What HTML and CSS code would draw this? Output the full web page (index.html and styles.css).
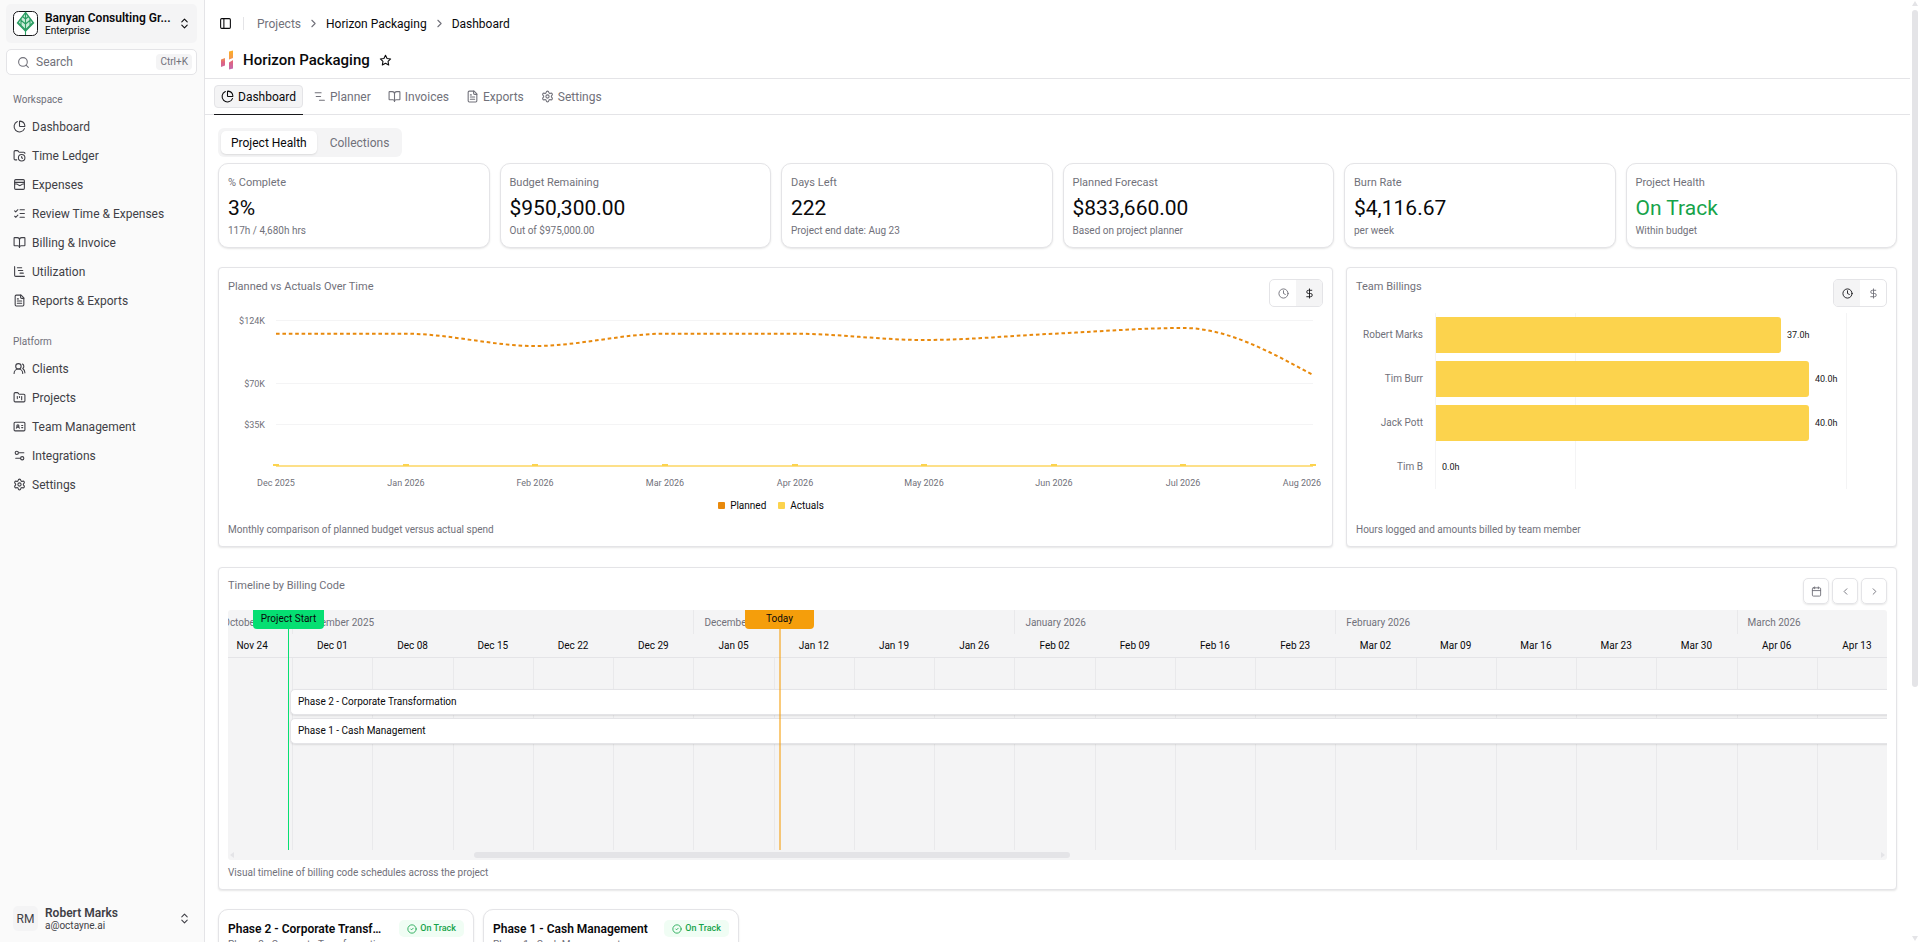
FILE: index.html
```
<!DOCTYPE html>
<html lang="en">
<head>
    <meta charset="UTF-8">
    <meta name="viewport" content="width=device-width, initial-scale=1.0">
    <title>Horizon Packaging - Dashboard</title>
    <link rel="stylesheet" href="styles.css">
</head>
<body>
    <!-- shared icons -->
    <svg class="sprite" aria-hidden="true">
        <symbol id="i-pie" viewBox="0 0 24 24"><path d="M21 12c.552 0 1.005-.449.95-.998a10 10 0 0 0-8.953-8.951c-.55-.055-.998.398-.998.95v8a1 1 0 0 0 1 1z"/><path d="M21.21 15.89A10 10 0 1 1 8 2.83"/></symbol>
        <symbol id="i-folder-clock" viewBox="0 0 24 24"><path d="M16 14v2.2l1.6 1"/><path d="M7 20H4a2 2 0 0 1-2-2V5a2 2 0 0 1 2-2h3.9a2 2 0 0 1 1.69.9l.81 1.2a2 2 0 0 0 1.67.9H20a2 2 0 0 1 2 2"/><circle cx="16" cy="16" r="6"/></symbol>
        <symbol id="i-wallet" viewBox="0 0 24 24"><rect x="3" y="3" width="18" height="18" rx="2"/><path d="M3 8h18"/><path d="M3 11h3.500c.8 0 1.600.3 2.100.9l1.100.9c1.600 1.600 4.100 1.600 5.700 0l1.100-.9c.5-.5 1.300-.9 2.100-.9H21"/></symbol>
        <symbol id="i-checks" viewBox="0 0 24 24"><path d="M13 5h8"/><path d="M13 12h8"/><path d="M13 19h8"/><path d="m3 17 2 2 4-4"/><path d="m3 7 2 2 4-4"/></symbol>
        <symbol id="i-book" viewBox="0 0 24 24"><path d="M12 7v14"/><path d="M3 18a1 1 0 0 1-1-1V4a1 1 0 0 1 1-1h5a4 4 0 0 1 4 4 4 4 0 0 1 4-4h5a1 1 0 0 1 1 1v13a1 1 0 0 1-1 1h-6a3 3 0 0 0-3 3 3 3 0 0 0-3-3z"/></symbol>
        <symbol id="i-gantt" viewBox="0 0 24 24"><path d="M3 3v16a2 2 0 0 0 2 2h16"/><path d="M8 5h8"/><path d="M10 10h8"/><path d="M13 15h6"/></symbol>
        <symbol id="i-file" viewBox="0 0 24 24"><path d="M15 2H6a2 2 0 0 0-2 2v16a2 2 0 0 0 2 2h12a2 2 0 0 0 2-2V7Z"/><path d="M14 2v4a2 2 0 0 0 2 2h4"/><path d="M10 9H8"/><path d="M16 13H8"/><path d="M16 17H8"/></symbol>
        <symbol id="i-users" viewBox="0 0 24 24"><path d="M18 21a8 8 0 0 0-16 0"/><circle cx="10" cy="8" r="5"/><path d="M22 20c0-3.370-2-6.500-4-8a5 5 0 0 0-.45-8.300"/></symbol>
        <symbol id="i-folder-kanban" viewBox="0 0 24 24"><path d="M4 20h16a2 2 0 0 0 2-2V8a2 2 0 0 0-2-2h-7.930a2 2 0 0 1-1.660-.9l-.82-1.200A2 2 0 0 0 7.930 3H4a2 2 0 0 0-2 2v13c0 1.100.9 2 2 2Z"/><path d="M8 10v4"/><path d="M12 10v2"/><path d="M16 10v6"/></symbol>
        <symbol id="i-id" viewBox="0 0 24 24"><path d="M16 10h2"/><path d="M16 14h2"/><path d="M6.170 15a3 3 0 0 1 5.660 0"/><circle cx="9" cy="11" r="2"/><rect x="2" y="4" width="20" height="16" rx="2"/></symbol>
        <symbol id="i-sliders" viewBox="0 0 24 24"><path d="M20 7h-9"/><path d="M14 17H5"/><circle cx="17" cy="17" r="3"/><circle cx="7" cy="7" r="3"/></symbol>
        <symbol id="i-gear" viewBox="0 0 24 24"><path d="M9.671 4.136a2.340 2.340 0 0 1 4.659 0 2.340 2.340 0 0 0 3.319 1.915 2.340 2.340 0 0 1 2.330 4.033 2.340 2.340 0 0 0 0 3.831 2.340 2.340 0 0 1-2.330 4.033 2.340 2.340 0 0 0-3.319 1.915 2.340 2.340 0 0 1-4.659 0 2.340 2.340 0 0 0-3.320-1.915 2.340 2.340 0 0 1-2.330-4.033 2.340 2.340 0 0 0 0-3.831A2.340 2.340 0 0 1 6.350 6.051a2.340 2.340 0 0 0 3.319-1.915"/><circle cx="12" cy="12" r="3"/></symbol>
        <symbol id="i-updown" viewBox="0 0 24 24"><path d="m7 15 5 5 5-5"/><path d="m7 9 5-5 5 5"/></symbol>
        <symbol id="i-search" viewBox="0 0 24 24"><circle cx="11" cy="11" r="8"/><path d="m21 21-4.300-4.300"/></symbol>
        <symbol id="i-panel" viewBox="0 0 24 24"><rect x="3" y="3" width="18" height="18" rx="2"/><path d="M9 3v18"/></symbol>
        <symbol id="i-right" viewBox="0 0 24 24"><path d="m9 18 6-6-6-6"/></symbol>
        <symbol id="i-left" viewBox="0 0 24 24"><path d="m15 18-6-6 6-6"/></symbol>
        <symbol id="i-star" viewBox="0 0 24 24"><path d="M12 2.300l2.900 6 6.600.9-4.800 4.600 1.200 6.600-5.900-3.200-5.900 3.200 1.200-6.600L2.500 9.200l6.600-.9z"/></symbol>
        <symbol id="i-planner" viewBox="0 0 24 24"><path d="M4 5h11"/><path d="M6 12h8"/><path d="M12 19h9"/></symbol>
        <symbol id="i-clock" viewBox="0 0 24 24"><circle cx="12" cy="12" r="10"/><path d="M12 6v6l4 2"/></symbol>
        <symbol id="i-dollar" viewBox="0 0 24 24"><path d="M12 2v20"/><path d="M17 5H9.500a3.500 3.500 0 0 0 0 7h5a3.500 3.500 0 0 1 0 7H6"/></symbol>
        <symbol id="i-calendar" viewBox="0 0 24 24"><path d="M8 2v4"/><path d="M16 2v4"/><rect x="3" y="4" width="18" height="18" rx="2"/><path d="M3 10h18"/></symbol>
        <symbol id="i-check" viewBox="0 0 24 24"><circle cx="12" cy="12" r="10"/><path d="m9 12 2 2 4-4"/></symbol>
    </svg>

    <div class="app">
        <aside class="sidebar">
            <button class="org" type="button">
                <svg class="org-logo" viewBox="0 0 25 25">
                    <rect x=".5" y=".5" width="24" height="24" rx="5" fill="#fff" stroke="#18181b"/>
                    <path d="M12.500 1.500 20.500 12 12.500 20 4.500 12Z" fill="#c9ecd8" stroke="#2a9d62" stroke-width="1.300"/>
                    <path d="M12.500 2v22M12.500 19 5 11.500M12.500 19 20 11.500M12.500 13 7 8.500M12.500 13 18 8.500M12.500 8 9.500 5.500M12.500 8l3-2.500M8 8v6M17 8v6" fill="none" stroke="#2a9d62" stroke-width="1.100"/>
                </svg>
                <span class="who">
                    <span class="who-name">Banyan Consulting Gr...</span>
                    <span class="who-sub">Enterprise</span>
                </span>
                <svg class="icon"><use href="#i-updown"/></svg>
            </button>

            <label class="search">
                <svg class="icon"><use href="#i-search"/></svg>
                <input type="text" placeholder="Search" aria-label="Search">
                <kbd>Ctrl+K</kbd>
            </label>

            <nav class="menu">
                <h2>Workspace</h2>
                <a href="#"><svg class="icon"><use href="#i-pie"/></svg>Dashboard</a>
                <a href="#"><svg class="icon"><use href="#i-folder-clock"/></svg>Time Ledger</a>
                <a href="#"><svg class="icon"><use href="#i-wallet"/></svg>Expenses</a>
                <a href="#"><svg class="icon"><use href="#i-checks"/></svg>Review Time &amp; Expenses</a>
                <a href="#"><svg class="icon"><use href="#i-book"/></svg>Billing &amp; Invoice</a>
                <a href="#"><svg class="icon"><use href="#i-gantt"/></svg>Utilization</a>
                <a href="#"><svg class="icon"><use href="#i-file"/></svg>Reports &amp; Exports</a>
            </nav>
            <nav class="menu">
                <h2>Platform</h2>
                <a href="#"><svg class="icon"><use href="#i-users"/></svg>Clients</a>
                <a href="#"><svg class="icon"><use href="#i-folder-kanban"/></svg>Projects</a>
                <a href="#"><svg class="icon"><use href="#i-id"/></svg>Team Management</a>
                <a href="#"><svg class="icon"><use href="#i-sliders"/></svg>Integrations</a>
                <a href="#"><svg class="icon"><use href="#i-gear"/></svg>Settings</a>
            </nav>

            <button class="org user" type="button">
                <span class="avatar">RM</span>
                <span class="who">
                    <span class="who-name">Robert Marks</span>
                    <span class="who-sub">a@octayne.ai</span>
                </span>
                <svg class="icon"><use href="#i-updown"/></svg>
            </button>
        </aside>

        <main class="main">
            <header class="topbar">
                <button class="icon-btn" type="button" aria-label="Toggle sidebar"><svg class="icon"><use href="#i-panel"/></svg></button>
                <span class="sep"></span>
                <nav class="crumbs">
                    <a class="muted" href="#">Projects</a>
                    <svg class="icon"><use href="#i-right"/></svg>
                    <a href="#">Horizon Packaging</a>
                    <svg class="icon"><use href="#i-right"/></svg>
                    <a href="#">Dashboard</a>
                </nav>
            </header>

            <div class="title-row">
                <svg class="logo" viewBox="0 0 14 20">
                    <defs>
                        <linearGradient id="grad" x1="0" y1="0" x2="0" y2="20" gradientUnits="userSpaceOnUse">
                            <stop offset="0" stop-color="#fdb022"/>
                            <stop offset=".4" stop-color="#f59a4a"/>
                            <stop offset=".6" stop-color="#e0637f"/>
                            <stop offset="1" stop-color="#c06ab5"/>
                        </linearGradient>
                    </defs>
                    <path fill="url(#grad)" d="M9 1.500 13 .5V8L9 9.500ZM1 9.500 5 8v7.500L1 17ZM9 12.500 13 10v8.500L9 19.500Z"/>
                </svg>
                <h1>Horizon Packaging</h1>
                <button class="icon-btn" type="button" aria-label="Add to favorites"><svg class="icon"><use href="#i-star"/></svg></button>
            </div>

            <nav class="tabs">
                <a class="active" href="#"><span><svg class="icon"><use href="#i-pie"/></svg>Dashboard</span></a>
                <a href="#"><span><svg class="icon"><use href="#i-planner"/></svg>Planner</span></a>
                <a href="#"><span><svg class="icon"><use href="#i-book"/></svg>Invoices</span></a>
                <a href="#"><span><svg class="icon"><use href="#i-file"/></svg>Exports</span></a>
                <a href="#"><span><svg class="icon"><use href="#i-gear"/></svg>Settings</span></a>
            </nav>

            <div class="content">
                <div class="segmented">
                    <button class="on" type="button">Project Health</button>
                    <button type="button">Collections</button>
                </div>

                <section class="stats">
                    <div class="stat"><h3>% Complete</h3><p class="value">3%</p><p class="note">117h / 4,680h hrs</p></div>
                    <div class="stat"><h3>Budget Remaining</h3><p class="value">$950,300.00</p><p class="note">Out of $975,000.00</p></div>
                    <div class="stat"><h3>Days Left</h3><p class="value">222</p><p class="note">Project end date: Aug 23</p></div>
                    <div class="stat"><h3>Planned Forecast</h3><p class="value">$833,660.00</p><p class="note">Based on project planner</p></div>
                    <div class="stat"><h3>Burn Rate</h3><p class="value">$4,116.67</p><p class="note">per week</p></div>
                    <div class="stat"><h3>Project Health</h3><p class="value good">On Track</p><p class="note">Within budget</p></div>
                </section>

                <section class="charts">
                    <div class="panel wide">
                        <div class="panel-head">
                            <h3>Planned vs Actuals Over Time</h3>
                            <div class="toggle">
                                <button type="button" aria-label="Hours"><svg class="icon"><use href="#i-clock"/></svg></button>
                                <button class="on" type="button" aria-label="Dollars"><svg class="icon"><use href="#i-dollar"/></svg></button>
                            </div>
                        </div>
                        <svg class="chart" viewBox="0 0 1095 186">
                            <g class="grid">
                                <path d="M48 13.500H1085M48 76.500H1085M48 117.500H1085"/>
                            </g>
                            <g class="ticks end">
                                <text x="37" y="17">$124K</text>
                                <text x="37" y="80">$70K</text>
                                <text x="37" y="121">$35K</text>
                            </g>
                            <path class="planned" d="M48 26.700H177.600C220.800 26.700 264.100 39 307.300 39S393.700 26.700 436.900 26.700H566.500C609.700 26.700 652.900 33 696.100 33C739.300 33 782.600 28.700 825.800 26.700C869 24.700 912.200 21 955.400 21C998.600 21 1041.800 44.500 1085 68"/>
                            <path class="actuals" d="M48 159H1085"/>
                            <g class="dots">
                                <rect x="45" y="157" width="6" height="2"/>
                                <rect x="175" y="157" width="6" height="2"/>
                                <rect x="304" y="157" width="6" height="2"/>
                                <rect x="434" y="157" width="6" height="2"/>
                                <rect x="564" y="157" width="6" height="2"/>
                                <rect x="693" y="157" width="6" height="2"/>
                                <rect x="823" y="157" width="6" height="2"/>
                                <rect x="952" y="157" width="6" height="2"/>
                                <rect x="1082" y="157" width="6" height="2"/>
                            </g>
                            <g class="ticks middle">
                                <text x="48" y="179">Dec 2025</text>
                                <text x="178" y="179">Jan 2026</text>
                                <text x="307" y="179">Feb 2026</text>
                                <text x="437" y="179">Mar 2026</text>
                                <text x="567" y="179">Apr 2026</text>
                                <text x="696" y="179">May 2026</text>
                                <text x="826" y="179">Jun 2026</text>
                                <text x="955" y="179">Jul 2026</text>
                                <text x="1074" y="179">Aug 2026</text>
                            </g>
                        </svg>
                        <div class="legend">
                            <span class="key key-planned">Planned</span>
                            <span class="key key-actuals">Actuals</span>
                        </div>
                        <p class="note">Monthly comparison of planned budget versus actual spend</p>
                    </div>

                    <div class="panel">
                        <div class="panel-head">
                            <h3>Team Billings</h3>
                            <div class="toggle">
                                <button class="on" type="button" aria-label="Hours"><svg class="icon"><use href="#i-clock"/></svg></button>
                                <button type="button" aria-label="Dollars"><svg class="icon"><use href="#i-dollar"/></svg></button>
                            </div>
                        </div>
                        <svg class="chart" viewBox="0 0 531 186">
                            <g class="grid">
                                <path d="M79.500 6V182M219.500 6V182M490.500 6V182"/>
                            </g>
                            <g class="bars">
                                <path d="M80 10H422a3 3 0 0 1 3 3V43a3 3 0 0 1-3 3H80Z"/>
                                <path d="M80 54H450a3 3 0 0 1 3 3V87a3 3 0 0 1-3 3H80Z"/>
                                <path d="M80 98H450a3 3 0 0 1 3 3V131a3 3 0 0 1-3 3H80Z"/>
                            </g>
                            <g class="ticks names end">
                                <text x="67" y="31">Robert Marks</text>
                                <text x="67" y="75">Tim Burr</text>
                                <text x="67" y="119">Jack Pott</text>
                                <text x="67" y="163">Tim B</text>
                            </g>
                            <g class="bar-values">
                                <text x="431" y="31">37.0h</text>
                                <text x="459" y="75">40.0h</text>
                                <text x="459" y="119">40.0h</text>
                                <text x="86" y="163">0.0h</text>
                            </g>
                        </svg>
                        <p class="note">Hours logged and amounts billed by team member</p>
                    </div>
                </section>

                <section class="panel timeline-panel">
                    <div class="panel-head">
                        <h3>Timeline by Billing Code</h3>
                        <div class="pager">
                            <button type="button" aria-label="Go to today"><svg class="icon"><use href="#i-calendar"/></svg></button>
                            <button type="button" aria-label="Previous"><svg class="icon"><use href="#i-left"/></svg></button>
                            <button type="button" aria-label="Next"><svg class="icon"><use href="#i-right"/></svg></button>
                        </div>
                    </div>
                    <div class="timeline">
                        <div class="track">
                            <div class="months">
                                <span>October 2025</span>
                                <span class="w5">November 2025</span>
                                <span class="w4">December 2025</span>
                                <span class="w4">January 2026</span>
                                <span class="w5">February 2026</span>
                                <span class="w2">March 2026</span>
                            </div>
                            <div class="weeks">
                                <span>Nov 24</span><span>Dec 01</span><span>Dec 08</span><span>Dec 15</span><span>Dec 22</span><span>Dec 29</span><span>Jan 05</span><span>Jan 12</span><span>Jan 19</span><span>Jan 26</span><span>Feb 02</span><span>Feb 09</span><span>Feb 16</span><span>Feb 23</span><span>Mar 02</span><span>Mar 09</span><span>Mar 16</span><span>Mar 23</span><span>Mar 30</span><span>Apr 06</span><span>Apr 13</span>
                            </div>
                            <div class="lanes">
                                <div class="columns">
                                    <i></i><i></i><i></i><i></i><i></i><i></i><i></i><i></i><i></i><i></i><i></i><i></i><i></i><i></i><i></i><i></i><i></i><i></i><i></i><i></i><i></i>
                                </div>
                                <div class="phase">Phase 2 - Corporate Transformation</div>
                                <div class="phase">Phase 1 - Cash Management</div>
                            </div>
                            <div class="marker start"><span>Project Start</span></div>
                            <div class="marker today"><span>Today</span></div>
                        </div>
                        <div class="hscroll"><span class="arrow-left"></span><span class="thumb"></span><span class="arrow-right"></span></div>
                    </div>
                    <p class="note">Visual timeline of billing code schedules across the project</p>
                </section>

                <section class="phases">
                    <article class="phase-card">
                        <header><h3>Phase 2 - Corporate Transformation</h3><span class="badge"><svg class="icon"><use href="#i-check"/></svg>On Track</span></header>
                        <p class="note">Phase 2 - Corporate Transformation</p>
                    </article>
                    <article class="phase-card">
                        <header><h3>Phase 1 - Cash Management</h3><span class="badge"><svg class="icon"><use href="#i-check"/></svg>On Track</span></header>
                        <p class="note">Phase 1 - Cash Management</p>
                    </article>
                </section>
            </div>
        </main>

        <div class="vscroll"><span class="arrow-up"></span><span class="thumb"></span><span class="arrow-down"></span></div>
    </div>
</body>
</html>
```

FILE: styles.css
```
* {
    box-sizing: border-box;
}
body {
    margin: 0;
    font-family: Roboto, "Liberation Sans", sans-serif;
    font-size: 12px;
    line-height: 16px;
    color: #09090b;
    background: #fff;
}
h1, h2, h3, p {
    margin: 0;
    font-weight: 400;
}
a {
    color: inherit;
    text-decoration: none;
}
button {
    font: inherit;
    color: inherit;
    background: none;
    border: 0;
    padding: 0;
    cursor: pointer;
}
.sprite {
    display: none;
}
.icon {
    width: 13px;
    height: 13px;
    flex: none;
    fill: none;
    stroke: currentColor;
    stroke-width: 2;
    stroke-linecap: round;
    stroke-linejoin: round;
}
.app {
    display: flex;
    height: 100vh;
    overflow: hidden;
}

/* Sidebar */
.sidebar {
    display: flex;
    flex-direction: column;
    flex: none;
    width: 205px;
    padding: 4px 7px 4px 6px;
    background: #fafafa;
    border-right: 1px solid #e4e4e7;
}
.org {
    display: flex;
    align-items: center;
    gap: 7px;
    height: 39px;
    padding: 0 6px 0 7px;
    border-radius: 5px;
    background: #f4f4f5;
    text-align: left;
}
.org-logo {
    width: 25px;
    height: 25px;
    flex: none;
}
.who {
    display: flex;
    flex-direction: column;
    flex: 1;
    min-width: 0;
}
.who-name {
    font-weight: 600;
    line-height: 14px;
    white-space: nowrap;
}
.who-sub {
    font-size: 10px;
    line-height: 12px;
}
.user {
    margin-top: auto;
    background: none;
    color: #3f3f46;
}
.avatar {
    display: flex;
    align-items: center;
    justify-content: center;
    width: 25px;
    height: 25px;
    border-radius: 5px;
    background: #f4f4f5;
}
.search {
    display: flex;
    align-items: center;
    gap: 6px;
    height: 26px;
    margin-top: 6px;
    padding: 0 4px 0 10px;
    border: 1px solid #e4e4e7;
    border-radius: 5px;
    background: #fff;
    color: #71717a;
}
.search input {
    flex: 1;
    width: 0;
    padding: 0;
    border: 0;
    outline: 0;
    background: none;
    font: inherit;
}
.search input::placeholder {
    color: #71717a;
}
.search kbd {
    padding: 0 4px;
    border-radius: 4px;
    background: #f4f4f5;
    font-family: inherit;
    font-size: 10px;
}
.menu {
    display: flex;
    flex-direction: column;
    margin-top: 11px;
    color: #3f3f46;
}
.menu h2 {
    padding: 0 7px;
    font-size: 10px;
    line-height: 28px;
    color: #71717a;
}
.menu a {
    display: flex;
    align-items: center;
    gap: 6px;
    height: 25px;
    margin-bottom: 4px;
    padding: 0 7px;
}

/* Header */
.main {
    flex: 1;
    min-width: 0;
    overflow: hidden;
}
.icon-btn {
    display: flex;
}
.topbar {
    display: flex;
    align-items: center;
    height: 47px;
    padding-left: 14px;
}
.sep {
    width: 1px;
    height: 13px;
    margin: 0 13px 0 11px;
    background: #e4e4e7;
}
.crumbs {
    display: flex;
    align-items: center;
    gap: 6px;
}
.muted, .crumbs .icon {
    color: #71717a;
}
.title-row {
    display: flex;
    align-items: center;
    height: 32px;
    padding: 0 0 5px 15px;
    border-bottom: 1px solid #e4e4e7;
}
.logo {
    width: 14px;
    height: 20px;
    margin-right: 9px;
}
.title-row h1 {
    margin-right: 9px;
    font-size: 15px;
    font-weight: 500;
    line-height: 20px;
}
.tabs {
    display: flex;
    gap: 3px;
    height: 36px;
    padding: 6px 0 0 9px;
    border-bottom: 1px solid #e4e4e7;
    color: #71717a;
}
.tabs a {
    height: 30px;
}
.tabs span {
    display: flex;
    align-items: center;
    gap: 4px;
    height: 23px;
    padding: 0 6px;
    border: 1px solid transparent;
    border-radius: 4px;
}
.tabs .active {
    border-bottom: 1px solid #18181b;
    color: #09090b;
}
.tabs .active span {
    background: #f4f4f5;
    border-color: #e4e4e7;
}

/* Content */
.content {
    padding: 13px;
}
.segmented {
    display: inline-flex;
    gap: 3px;
    padding: 3px;
    border-radius: 6px;
    background: #f4f4f5;
    color: #71717a;
    vertical-align: top;
}
.segmented button {
    height: 23px;
    padding: 0 10px;
    border-radius: 5px;
}
.segmented .on {
    background: #fff;
    color: #09090b;
    box-shadow: 0 1px 2px rgba(0, 0, 0, 0.1);
}
.stats {
    display: grid;
    grid-template-columns: repeat(6, 1fr);
    gap: 10px;
    margin-top: 6px;
}
.stat, .panel, .phase-card {
    padding: 11px 9px 8px;
    border: 1px solid #e4e4e7;
    border-radius: 4px;
    background: #fff;
    box-shadow: 0 1px 2px rgba(0, 0, 0, 0.1);
}
.stat {
    border-radius: 10px;
}
.stat h3, .panel h3 {
    font-size: 11px;
    color: #71717a;
}
.note {
    font-size: 10px;
    color: #71717a;
}
.value {
    padding-top: 2px;
    font-size: 21px;
    line-height: 30px;
}
.good {
    color: #16a34a;
}
.charts {
    display: grid;
    grid-template-columns: repeat(3, 1fr);
    gap: 13px;
    margin-top: 19px;
}
.panel {
    display: flex;
    flex-direction: column;
}
.wide {
    grid-column: span 2;
}
.panel-head {
    display: flex;
    align-items: flex-start;
    justify-content: space-between;
}
.panel .note {
    margin-top: auto;
}
.toggle {
    display: flex;
    height: 28px;
    border: 1px solid #e4e4e7;
    border-radius: 5px;
    overflow: hidden;
    color: #71717a;
}
.toggle button {
    display: flex;
    align-items: center;
    justify-content: center;
    width: 26px;
}
.toggle .on {
    background: #f4f4f5;
    color: #18181b;
}
.toggle .icon, .pager .icon {
    width: 11px;
    height: 11px;
}
.chart {
    display: block;
    width: 100%;
    height: auto;
}
.grid {
    fill: none;
    stroke: #f4f4f5;
}
.ticks {
    font-size: 9px;
    fill: #71717a;
}
.names {
    font-size: 10px;
}
.end {
    text-anchor: end;
}
.middle {
    text-anchor: middle;
}
.planned {
    fill: none;
    stroke: #e8890c;
    stroke-width: 2;
    stroke-dasharray: 3.6 2.8;
}
.actuals {
    fill: none;
    stroke: #fde089;
    stroke-width: 2;
}
.dots, .bars {
    fill: #fcd34d;
}
.bar-values {
    font-size: 9px;
    fill: #18181b;
}
.legend {
    display: flex;
    align-items: center;
    justify-content: center;
    gap: 12px;
    height: 25px;
    padding-right: 9px;
    font-size: 10px;
}
.key {
    display: flex;
    align-items: center;
    gap: 5px;
}
.key::before {
    content: "";
    width: 7px;
    height: 7px;
    border-radius: 1px;
}
.key-planned::before {
    background: #e8890c;
}
.key-actuals::before {
    background: #fcd34d;
}
.charts .panel {
    min-height: 280px;
}

/* Timeline */
.timeline-panel {
    margin-top: 20px;
    padding-top: 10px;
}
.pager {
    display: flex;
    gap: 3px;
    color: #71717a;
}
.pager button {
    display: flex;
    align-items: center;
    justify-content: center;
    width: 26px;
    height: 26px;
    border: 1px solid #e4e4e7;
    border-radius: 5px;
    box-shadow: 0 1px 2px rgba(0, 0, 0, 0.1);
}
.timeline {
    margin: 6px 0 5px;
    border-radius: 3px;
    background: #f4f4f5;
    overflow: hidden;
}
/* scrolled a little: the first and last weeks are cut off */
.track {
    position: relative;
    margin: 0 -10px 0 -16px;
}
.months, .weeks, .columns {
    display: grid;
    grid-template-columns: repeat(21, minmax(0, 1fr));
}
.months span {
    height: 24px;
    padding: 5px 0 0 10px;
    border-left: 1px solid #e9e9eb;
    font-size: 10px;
    color: #71717a;
    white-space: nowrap;
}
.w5 {
    grid-column: span 5;
}
.w4 {
    grid-column: span 4;
}
.w2 {
    grid-column: span 2;
}
.weeks {
    border-bottom: 1px solid #e4e4e7;
}
.weeks span {
    height: 23px;
    padding-top: 4px;
    font-size: 10px;
    text-align: center;
}
.lanes {
    position: relative;
    display: flex;
    flex-direction: column;
    gap: 3px;
    height: 192px;
    padding: 31px 0 0 78px;
}
.columns {
    position: absolute;
    inset: 0;
}
.columns i {
    border-left: 1px solid #e9e9eb;
}
.phase {
    position: relative;
    height: 26px;
    padding-left: 7px;
    border: 1px solid #e4e4e7;
    border-radius: 5px;
    background: #fff;
    box-shadow: 0 1px 2px rgba(0, 0, 0, 0.1);
    font-size: 10px;
    line-height: 24px;
}
.marker {
    position: absolute;
    top: 0;
    bottom: 0;
    display: flex;
    justify-content: center;
}
.marker span {
    position: relative;
    height: 19px;
    border-radius: 0 0 4px 4px;
    font-size: 10px;
    line-height: 18px;
    text-align: center;
}
.marker::before {
    content: "";
    position: absolute;
    top: 0;
    bottom: 0;
    width: 1px;
    background: #05df72;
}
.start {
    left: 41px;
}
.start span {
    width: 71px;
    background: #05df72;
}
.today {
    left: 533px;
}
.today span {
    width: 69px;
    background: #f59e0b;
}
.today::before {
    width: 2px;
    background: rgba(245, 158, 11, 0.55);
}
.hscroll {
    display: flex;
    align-items: center;
    height: 10px;
    padding: 0 2px;
}
.thumb {
    border-radius: 3px;
    background: #e4e4e7;
}
.hscroll .thumb {
    width: 36%;
    height: 6px;
    margin: 0 auto 0 14.5%;
}
.arrow-left, .arrow-right, .arrow-up, .arrow-down {
    border: 3px solid transparent;
}
.arrow-left {
    border-left: 0;
    border-right: 4px solid #e4e4e7;
}
.arrow-right {
    border-right: 0;
    border-left: 4px solid #e4e4e7;
}
.arrow-up {
    border-top: 0;
    border-bottom: 5px solid #e4e4e7;
}
.arrow-down {
    border-bottom: 0;
    border-top: 5px solid #e4e4e7;
}

/* Phase cards */
.phases {
    display: flex;
    gap: 9px;
    margin-top: 19px;
}
.phase-card {
    width: 256px;
    padding-top: 10px;
    border-radius: 10px;
}
.phase-card header {
    display: flex;
    align-items: center;
    gap: 12px;
}
.phase-card h3 {
    flex: 1;
    overflow: hidden;
    font-size: 12px;
    font-weight: 600;
    text-overflow: ellipsis;
    white-space: nowrap;
}
.badge {
    display: flex;
    align-items: center;
    gap: 3px;
    padding: 0 8px;
    border-radius: 5px;
    background: #f0fdf4;
    color: #16a34a;
    font-size: 9px;
    font-weight: 500;
    line-height: 17px;
}
.badge .icon {
    width: 10px;
    height: 10px;
}
.vscroll {
    display: flex;
    flex-direction: column;
    align-items: center;
    flex: none;
    width: 9px;
    padding: 1px 1px 1px 2px;
}
.vscroll .thumb {
    flex: none;
    width: 6px;
    height: 72%;
    margin: 4px 0 auto;
}
```
